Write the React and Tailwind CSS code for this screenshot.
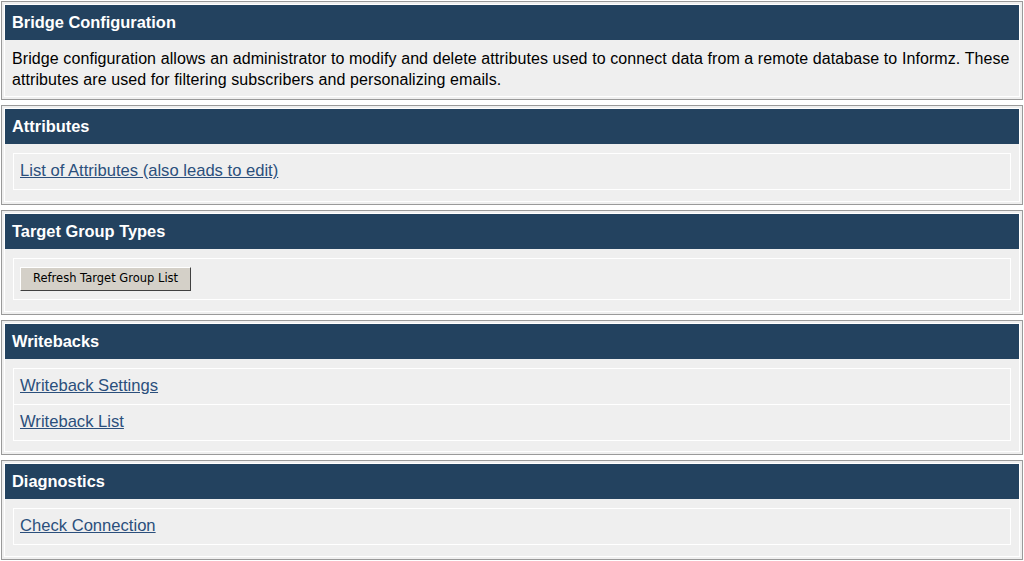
import React from 'react';

const font = { fontFamily: '"Liberation Sans", Arial, sans-serif' };

function Panel({ title, children }) {
  return (
    <div className="border border-[#9a9a9a] bg-[#efefef] p-[2px]">
      <div className="border border-white">
        <div className="h-[35px] bg-[#23425f] px-[7px] flex items-center text-white font-bold text-[16.4px]">
          {title}
        </div>
        {children}
      </div>
    </div>
  );
}

function LinkRow({ children }) {
  return (
    <div className="h-[35px] flex items-center px-[6px]">
      <a href="#" className="text-[#2b4f7c] underline text-[16.6px]">{children}</a>
    </div>
  );
}

export default function App() {
  return (
    <div className="bg-white w-[1024px] h-[561px] overflow-hidden pt-[1px] px-[1px] flex flex-col gap-[5px]" style={font}>
      <Panel title="Bridge Configuration">
        <p className="px-[7px] pt-[8px] pb-[6px] text-[16px] tracking-[0.09px] leading-[21px] text-black">
          Bridge configuration allows an administrator to modify and delete attributes used to connect data from a remote database to Informz. These attributes are used for filtering subscribers and personalizing emails.
        </p>
      </Panel>

      <Panel title="Attributes">
        <div className="px-[8px] pt-[9px] pb-[11px]">
          <div className="border border-white">
            <LinkRow>List of Attributes (also leads to edit)</LinkRow>
          </div>
        </div>
      </Panel>

      <Panel title="Target Group Types">
        <div className="px-[8px] pt-[9px] pb-[11px]">
          <div className="border border-white h-[42px] flex items-center px-[6px]">
            <button
              className="h-[24px] px-[12px] bg-[#d4d0c8] border border-t-white border-l-white border-r-[#404040] border-b-[#404040] text-black"
              style={{ fontFamily: '"DejaVu Sans", Tahoma, sans-serif', fontSize: '11.5px' }}
            >
              Refresh Target Group List
            </button>
          </div>
        </div>
      </Panel>

      <Panel title="Writebacks">
        <div className="px-[8px] pt-[9px] pb-[10px]">
          <div className="border border-white">
            <LinkRow>Writeback Settings</LinkRow>
            <div className="border-t border-white">
              <LinkRow>Writeback List</LinkRow>
            </div>
          </div>
        </div>
      </Panel>

      <Panel title="Diagnostics">
        <div className="px-[8px] pt-[9px] pb-[11px]">
          <div className="border border-white">
            <LinkRow>Check Connection</LinkRow>
          </div>
        </div>
      </Panel>
    </div>
  );
}
